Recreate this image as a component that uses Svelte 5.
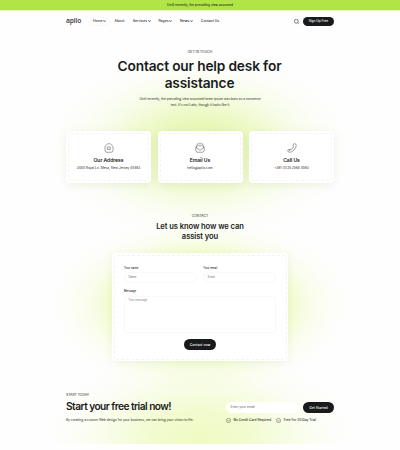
<script>
  const links = [
    { label: 'Home', menu: true, width: 21, active: true },
    { label: 'About', width: 19 },
    { label: 'Services', menu: true, width: 25.5 },
    { label: 'Pages', menu: true, width: 21.5 },
    { label: 'News', menu: true, width: 21 },
    { label: 'Contact Us', width: 26 }
  ];
  const cards = [
    { icon: 'home', title: 'Our Address', text: '3484 Royal Ln. Mesa, New Jersey 45463' },
    { icon: 'mail', title: 'Email Us', text: 'hello@aplio.com' },
    { icon: 'phone', title: 'Call Us', text: '+391 (0)35 2568 4593' }
  ];
  const perks = ['No Credit Card Required', 'Free For 30 Day Trial'];
</script>

<div class="page">
  <div class="banner">Until recently, the prevailing view assumed</div>
  <header>
    <span class="logo">aplio</span>
    <nav>
      {#each links as l}
        <a class:active={l.active} style="width:{l.width}px">
          {l.label}{#if l.menu}<svg width="3" height="2" viewBox="0 0 3 2"><path d="M.3 .7L1.5 1.3L2.7 .7" fill="none" stroke="#222" stroke-width=".8" /></svg>{/if}
        </a>
      {/each}
    </nav>
    <span class="search">
      <svg width="5" height="5" viewBox="0 0 10 10" fill="none" stroke="#222" stroke-width="1.1"><circle cx="4.6" cy="4.6" r="3.9" /><path d="M7.5 7.5l2 2" /></svg>
    </span>
    <button class="signup">Sign Up Free</button>
  </header>

  <section class="hero">
    <div class="eyebrow">GET IN TOUCH</div>
    <h1>Contact our help desk for<br />assistance</h1>
    <p>Until recently, the prevailing view assumed lorem ipsum was born as a nonsense<br />text. It's not Latin, though it looks like it</p>
  </section>

  <section class="cards">
    {#each cards as c}
      <article>
        <div class="dash">
          <svg width="10" height="10" viewBox="0 0 20 20" fill="none" stroke="#444" stroke-width="1" stroke-linecap="round" stroke-linejoin="round">
            {#if c.icon === 'home'}
              <path d="M2 8Q2 6.5 3.2 5.5L6.5 2.3Q7.5 1.5 9 1.5H11Q12.5 1.5 13.5 2.3L16.8 5.5Q18 6.5 18 8V15Q18 18.5 14.5 18.5H5.5Q2 18.5 2 15Z" /><rect x="7.5" y="8" width="5" height="5" />
            {:else if c.icon === 'mail'}
              <path d="M4 8V4Q4 1.5 6.5 1.5H13.5Q16 1.5 16 4V8" /><path d="M3.8 6Q1.5 7.5 1.5 10V14.5Q1.5 18.5 5.5 18.5H14.5Q18.5 18.5 18.5 14.5V10Q18.5 7.5 16.2 6" /><path d="M2 9L8 13.5Q10 15 12 13.5L18 9M7.5 5.5H12.5" />
            {:else}
              <path d="M14 1.5Q12 2.2 12.3 4L12.8 6Q13 8 11.5 10Q10 12 8 12.8Q6.5 13.3 5 13L3.5 13Q1.5 13.5 1.2 15.5Q1.5 18 5 18.5Q9.5 18.8 14 14.2Q18.5 9 18.5 4.5Q18 1.5 15.5 1.2Z" /><path d="M5.5 13L5 15.5" />
            {/if}
          </svg>
          <h3>{c.title}</h3>
          <p>{c.text}</p>
        </div>
      </article>
    {/each}
  </section>

  <section class="contact">
    <div class="eyebrow">CONTACT</div>
    <h2>Let us know how we can<br />assist you</h2>
    <form>
      <div class="inner">
        <div class="row">
          <div class="field"><label for="name">Your name</label><div class="box" id="name">Name</div></div>
          <div class="field"><label for="email">Your email</label><div class="box" id="email">Email</div></div>
        </div>
        <div class="message"><label for="msg">Message</label><div class="area" id="msg">Your message</div></div>
        <button type="button" class="send">Contact now</button>
      </div>
    </form>
  </section>

  <footer>
    <div class="left">
      <div class="eyebrow">START TODAY</div>
      <h2>Start your free trial now!</h2>
      <p>By creating a custom Web design for your business, we can bring your vision to life.</p>
    </div>
    <div class="right">
      <div class="signrow"><div class="entry">Enter your email</div><button>Get Started</button></div>
      <div class="perks">
        {#each perks as p}
          <span><svg width="5" height="5" viewBox="0 0 10 10" fill="none" stroke="#333" stroke-width=".8"><circle cx="5" cy="5" r="4.3" /><path d="M2.8 4.8L4.5 6L7.3 4.5" /></svg>{p}</span>
        {/each}
      </div>
    </div>
  </footer>
</div>

<style>
  :global(body) { margin: 0; background: #fefefe; }
  .page {
    width: 400px; height: 450px; overflow: hidden; box-sizing: border-box;
    font-family: Inter, "Liberation Sans", sans-serif; font-size: 3.4px; color: #2b2d2b;
    background:
      linear-gradient(#fefefe, #fefefe) 0 444px / 400px 6px no-repeat,
      radial-gradient(ellipse 152px 92px at 200px 146px, rgba(203, 240, 88, 0.53) 0%, rgba(203, 240, 88, 0.42) 25%, rgba(203, 240, 88, 0.28) 43%, rgba(203, 240, 88, 0.13) 62%, rgba(203, 240, 88, 0.045) 80%, rgba(203, 240, 88, 0) 100%),
      radial-gradient(ellipse 150px 88px at 200px 305px, rgba(210, 244, 85, 0.4) 0%, rgba(210, 244, 85, 0.37) 48%, rgba(210, 244, 85, 0.27) 61%, rgba(210, 244, 85, 0.11) 74%, rgba(210, 244, 85, 0.035) 87%, rgba(210, 244, 85, 0) 100%),
      radial-gradient(ellipse 152px 92px at 200px 440px, rgba(210, 244, 85, 0.35) 0%, rgba(210, 244, 85, 0.28) 32%, rgba(210, 244, 85, 0.16) 54%, rgba(210, 244, 85, 0.06) 76%, rgba(210, 244, 85, 0) 100%),
      #fefefe;
  }
  h1, h2, h3, p { margin: 0; }
  button { border: 0; padding: 0; font: 500 3.4px Inter, sans-serif; color: #fff; background: #191a1c; border-radius: 6px; }
  .banner { height: 10px; line-height: 11.5px; background: #b1e447; border-bottom: 1px solid #e6f6c4; text-align: center; font-size: 3.22px; font-weight: 500; color: #28330f; }
  header { height: 20.5px; margin: 0 66px; display: flex; align-items: center; }
  .logo { width: 23px; font-family: "Open Sans", sans-serif; font-size: 6.7px; line-height: 8px; font-weight: 600; letter-spacing: -0.1px; color: #333436; }
  nav { display: flex; flex: 1; }
  nav a { height: 9px; display: flex; align-items: center; justify-content: center; gap: 0.5px; font-size: 3.45px; font-weight: 500; box-sizing: border-box; border-radius: 5px; white-space: nowrap; }
  .active { border: 1px solid #f7f7f7; }
  .search { width: 10px; height: 10px; margin-right: 1.5px; display: flex; align-items: center; justify-content: center; border-radius: 5px; background: #fcfcfc; }
  .signup { width: 31px; height: 8.5px; font-size: 3.2px; }
  .eyebrow { font-size: 3.4px; line-height: 5px; font-weight: 400; }
  .hero { height: 99.5px; box-sizing: border-box; padding-top: 18px; text-align: center; }
  .hero h1 { margin: 3.5px 1px 0 0; font-size: 13.7px; line-height: 16.5px; font-weight: 600; letter-spacing: -0.15px; color: #1b1c1e; }
  .hero p { margin-top: 4.5px; font-size: 3.2px; line-height: 6px; }
  .cards { display: flex; gap: 6.5px; margin: 0 66px; }
  article { flex: 1; height: 52px; box-sizing: border-box; padding: 2px; border-radius: 4px; background: #fff; box-shadow: 0 2px 9px rgba(100, 120, 40, 0.1); }
  .dash { height: 48px; box-sizing: border-box; padding-top: 8.5px; border: 1px dashed #f5f5f5; border-radius: 3px; display: flex; flex-direction: column; align-items: center; }
  .dash svg { flex: none; }
  h3 { margin-top: 4px; font-size: 5.1px; line-height: 6px; font-weight: 600; letter-spacing: -0.08px; color: #222; }
  .dash p { margin-top: 3px; font-size: 3.25px; line-height: 5px; white-space: nowrap; }
  .contact { padding-top: 31px; text-align: center; }
  .contact h2 { margin-top: 3px; font-size: 7.6px; line-height: 10.3px; font-weight: 600; letter-spacing: -0.08px; color: #1b1c1e; }
  form { width: 176px; height: 108px; box-sizing: border-box; margin: 10.5px auto 0; padding: 1.5px; border-radius: 4px; background: #fff; box-shadow: 0 2px 7px rgba(100, 120, 40, 0.08); }
  .inner { height: 105px; box-sizing: border-box; padding: 10px 9.5px 0; border: 1px dashed #f4f4f4; border-radius: 3px; text-align: left; }
  .row { display: flex; gap: 6.5px; }
  .field { flex: 1; }
  label { display: block; font-size: 2.8px; line-height: 5px; font-weight: 500; }
  .box { height: 11px; margin-top: 1px; line-height: 9.5px; padding-left: 3.5px; box-sizing: border-box; border: 1px solid #f9f9f9; border-radius: 6px; font-size: 2.9px; color: #777; }
  .message { margin-top: 6.5px; }
  .area { height: 37.5px; margin-top: 1.5px; box-sizing: border-box; padding: 1px 3.5px; line-height: 5px; border: 1px solid #f9f9f9; border-radius: 3px; font-size: 2.75px; color: #888; }
  .send { display: block; width: 32px; height: 11px; margin: 6px auto 0; }
  footer { margin: 31.5px 66px 0; display: flex; justify-content: space-between; }
  .left h2 { margin-top: 2px; font-size: 10.2px; line-height: 13.5px; font-weight: 600; letter-spacing: -0.55px; color: #1b1c1e; }
  .left p { margin-top: 5px; line-height: 5px; font-size: 3.22px; white-space: nowrap; }
  .right { width: 108px; padding-top: 9.5px; }
  .signrow { display: flex; justify-content: space-between; }
  .entry { width: 73px; height: 11px; box-sizing: border-box; padding-left: 4.5px; line-height: 11px; border-radius: 6px; background: #fff; color: #666; font-size: 3.2px; }
  .signrow button { width: 31px; height: 11px; }
  .perks { display: flex; gap: 5px; margin-top: 5px; line-height: 5px; font-weight: 500; font-size: 3.25px; }
  .perks span { display: flex; gap: 2.5px; align-items: center; white-space: nowrap; }
</style>
